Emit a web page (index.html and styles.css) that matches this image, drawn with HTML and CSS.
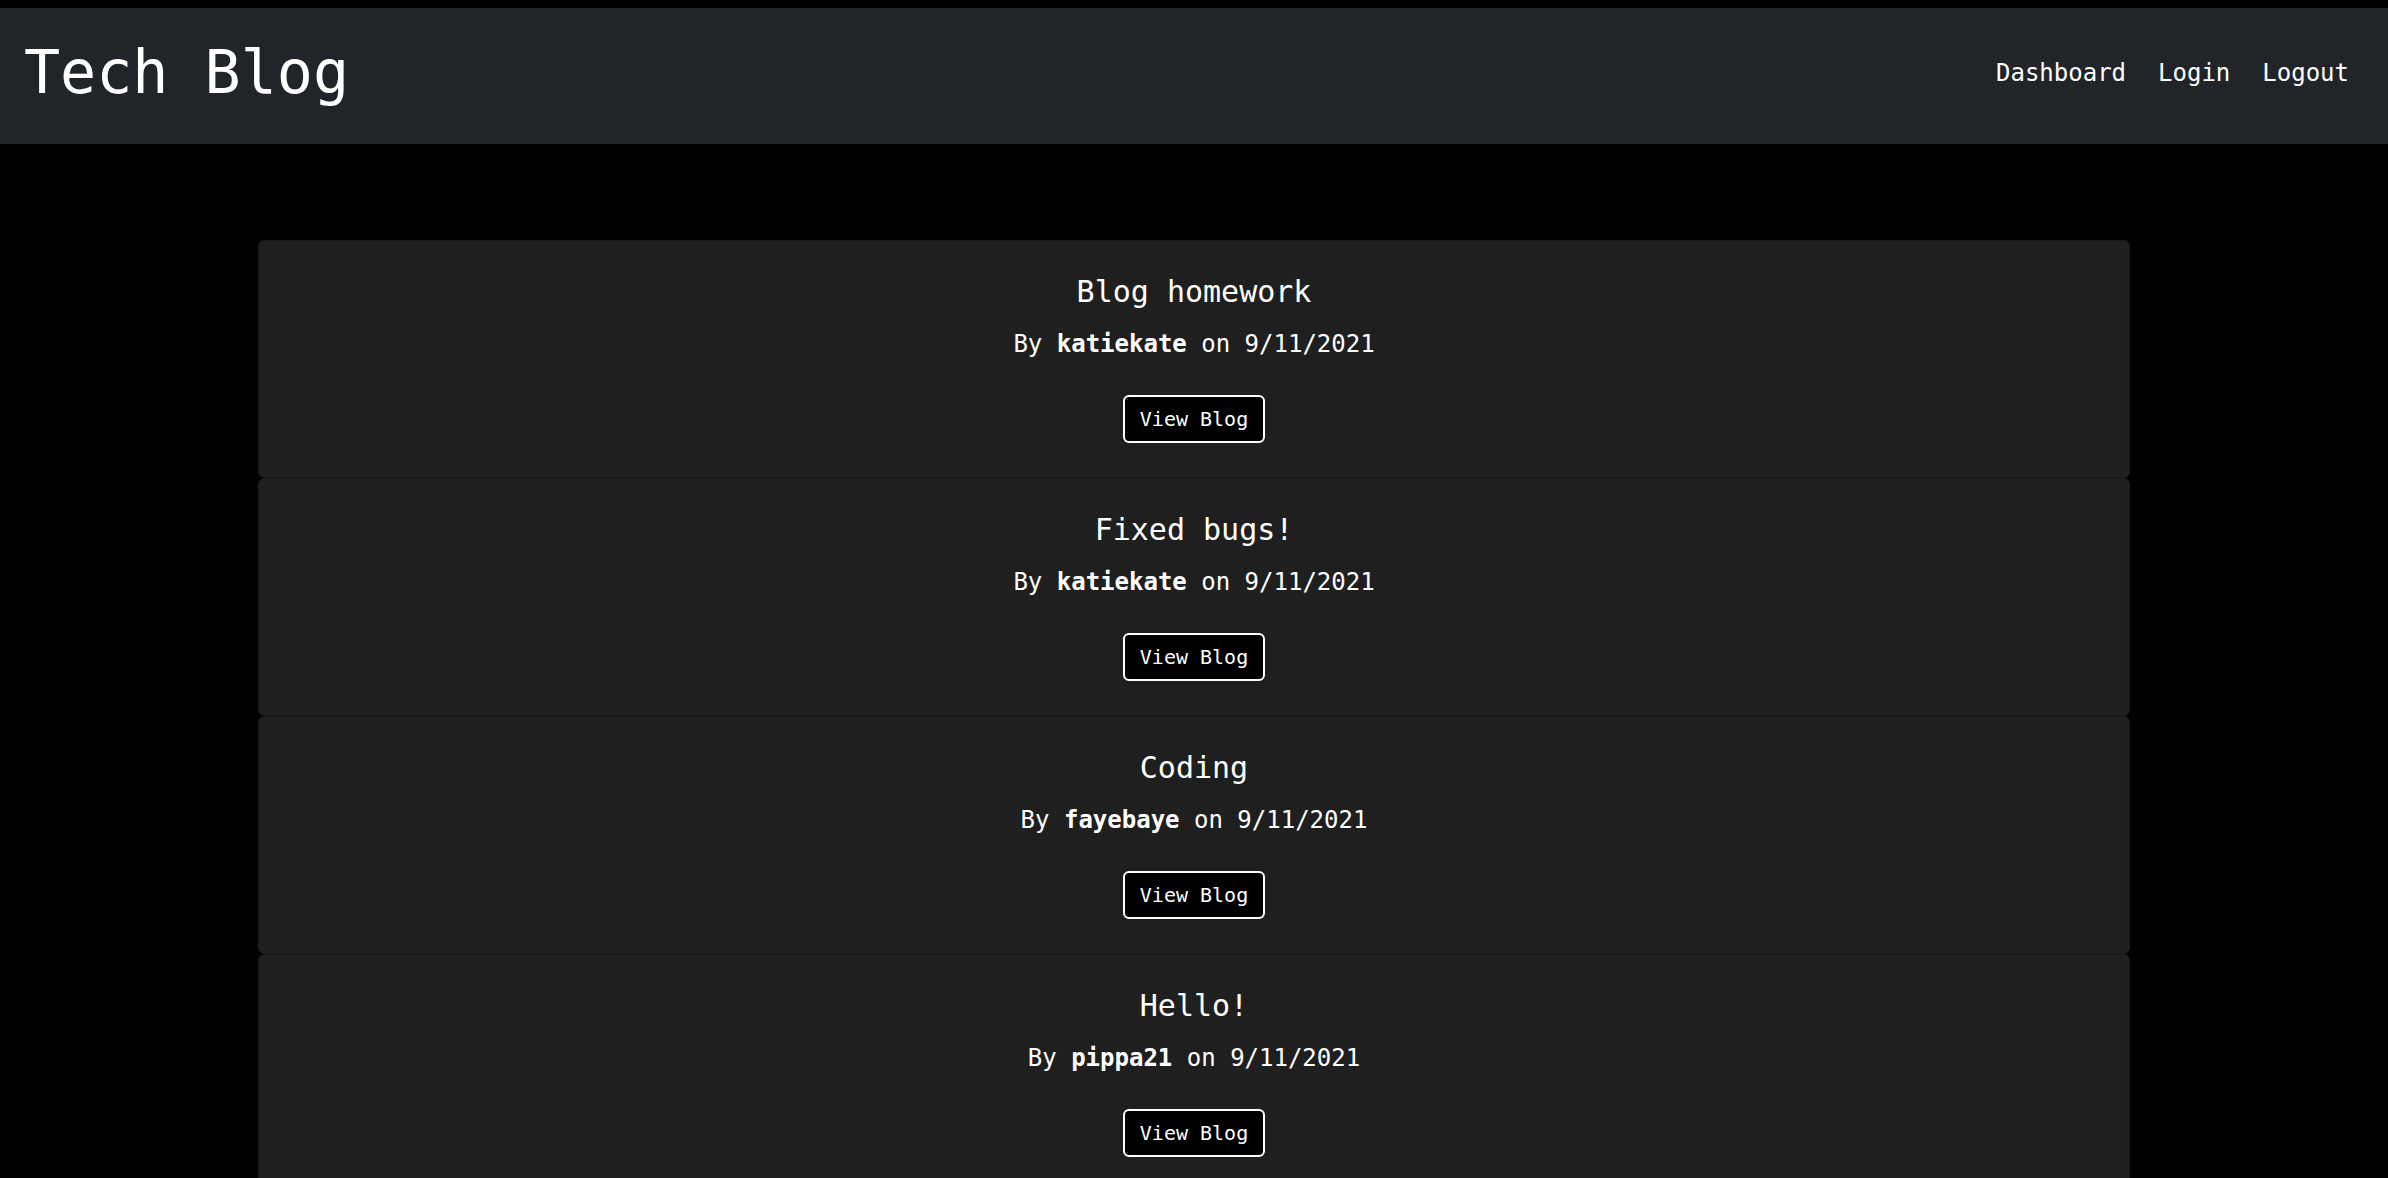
FILE: index.html
```html
<!DOCTYPE html>
<html lang="en">
<head>
<meta charset="utf-8">
<title>Tech Blog</title>
<link rel="stylesheet" href="styles.css">
</head>
<body>
<header class="site-header">
  <h1 class="brand">Tech Blog</h1>
  <nav class="nav">
    <a class="nav-link" href="#">Dashboard</a>
    <a class="nav-link" href="#">Login</a>
    <a class="nav-link" href="#">Logout</a>
  </nav>
</header>
<main class="posts">
  <article class="card">
    <h2 class="card-title">Blog homework</h2>
    <p class="byline">By <strong>katiekate</strong> on 9/11/2021</p>
    <a class="btn" href="#">View Blog</a>
  </article>
  <article class="card">
    <h2 class="card-title">Fixed bugs!</h2>
    <p class="byline">By <strong>katiekate</strong> on 9/11/2021</p>
    <a class="btn" href="#">View Blog</a>
  </article>
  <article class="card">
    <h2 class="card-title">Coding</h2>
    <p class="byline">By <strong>fayebaye</strong> on 9/11/2021</p>
    <a class="btn" href="#">View Blog</a>
  </article>
  <article class="card">
    <h2 class="card-title">Hello!</h2>
    <p class="byline">By <strong>pippa21</strong> on 9/11/2021</p>
    <a class="btn" href="#">View Blog</a>
  </article>
</main>
</body>
</html>
```

FILE: styles.css
```css
* { box-sizing: border-box; }

html, body {
  margin: 0;
  background: #000;
  color: #fff;
  font-family: "DejaVu Sans Mono", "Liberation Mono", monospace;
}

body {
  padding-top: 8px;
}

.site-header {
  display: flex;
  justify-content: space-between;
  align-items: flex-start;
  height: 136px;
  padding: 28px 25px 0 24px;
  background: #212529;
}

.brand {
  margin: 0;
  font-size: 60px;
  font-weight: normal;
  line-height: 72px;
}

.nav {
  display: flex;
  margin-top: 19px;
}

.nav-link {
  color: #fff;
  text-decoration: none;
  font-size: 24px;
  line-height: 36px;
  padding: 0 16px;
}

.nav-link:last-child {
  padding-right: 14px;
}

.posts {
  width: 1872px;
  margin: 96px auto 0;
}

.card {
  display: flex;
  flex-direction: column;
  align-items: center;
  padding: 33px 16px 34px;
  background: #201f20;
  border: 1px solid #1a191a;
  border-radius: 6px;
  text-align: center;
}

.card-title {
  margin: 0 0 16px;
  font-size: 30px;
  font-weight: normal;
  line-height: 36px;
}

.byline {
  margin: 0 0 33px;
  font-size: 24px;
  line-height: 36px;
}

.byline strong {
  font-weight: bold;
}

.btn {
  display: inline-block;
  color: #fff;
  background: #000;
  text-decoration: none;
  font-size: 20px;
  line-height: 30px;
  padding: 7px 15px;
  border: 2px solid #fff;
  border-radius: 6px;
}
```
